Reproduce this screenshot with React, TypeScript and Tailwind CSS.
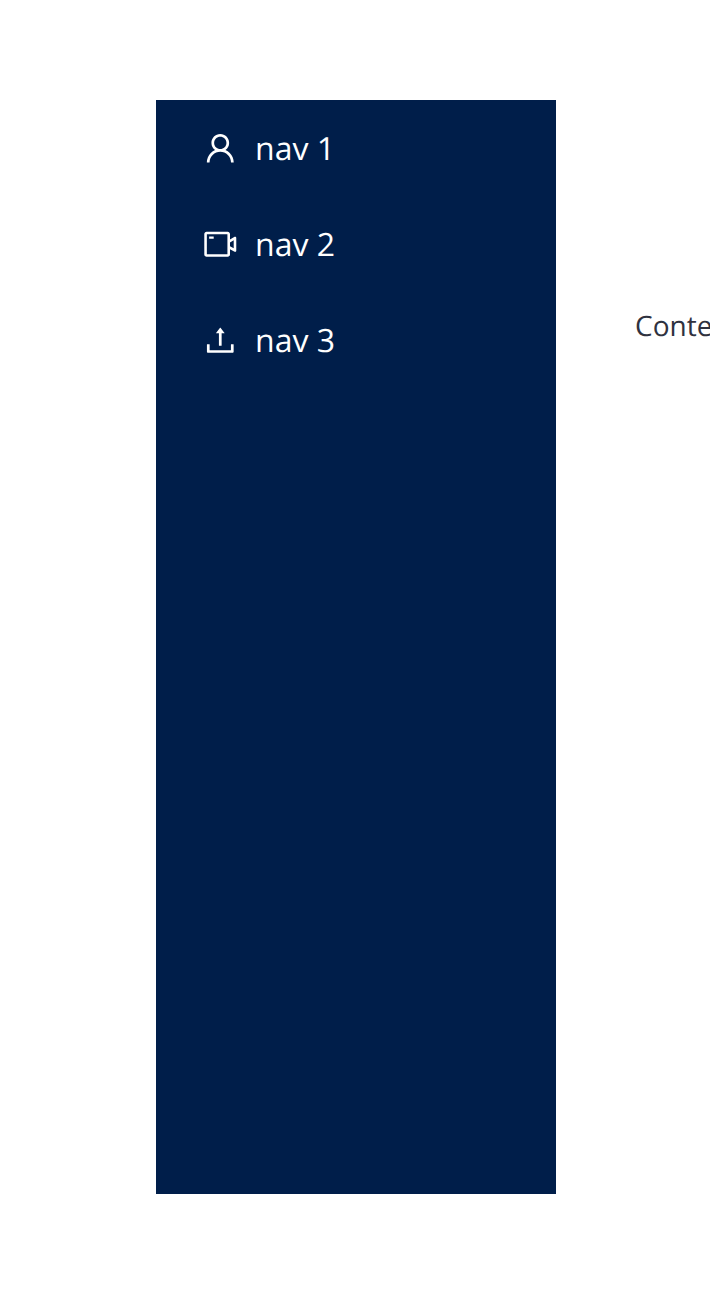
import { AiOutlineUser, AiOutlineVideoCamera, AiOutlineUpload } from "react-icons/ai";

const NAV = [
  { label: "nav 1", icon: AiOutlineUser },
  { label: "nav 2", icon: AiOutlineVideoCamera },
  { label: "nav 3", icon: AiOutlineUpload },
];

export default function App() {
  return (
    <div className="flex h-[1294px] w-[710px] overflow-hidden bg-white py-[100px] pl-[156px] font-['Open_Sans',sans-serif] [text-rendering:geometricPrecision]">
      <aside className="h-[1094px] w-[400px] shrink-0 bg-[#001e4a]">
        {NAV.map((item) => (
          <div key={item.label} className="flex h-24 items-center pl-12 text-[32px] text-white">
            {/* the glyphs sit inside a 1024 box, so scale up to fill 32px */}
            <item.icon className="-ml-[2.28px] mr-[16.72px] size-[36.57px] shrink-0" />
            <span className="pt-0.5">{item.label}</span>
          </div>
        ))}
      </aside>
      <main className="shrink-0 pl-[79px] pt-[205px]">
        <p className="whitespace-nowrap text-[28px] leading-[42px] text-[#2f3240]">Content</p>
      </main>
    </div>
  );
}
